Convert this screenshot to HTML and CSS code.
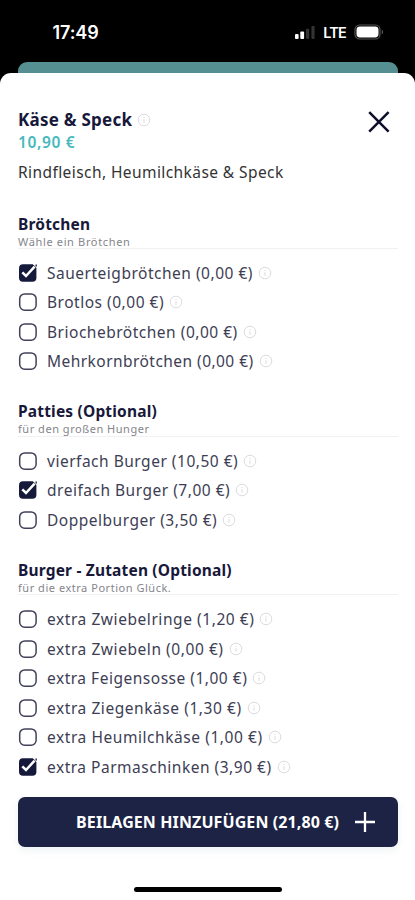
FILE: index.html
```html
<!DOCTYPE html>
<html lang="de">
<head>
<meta charset="utf-8">
<title>Käse &amp; Speck</title>
<link rel="stylesheet" href="styles.css">
</head>
<body>
<svg width="0" height="0" class="defs">
  <symbol id="info" viewBox="0 0 14 14"><circle cx="7" cy="7" r="5.8" fill="none" stroke="currentColor"/><path d="M7 6.2v3.6M7 4v1" stroke="currentColor" stroke-width="1.1"/></symbol>
  <symbol id="off" viewBox="0 0 20 20"><rect x="1.7" y="1.9" width="16.4" height="16.4" rx="5" fill="#fff" stroke="#41425a" stroke-width="1.5"/></symbol>
  <symbol id="on" viewBox="0 0 20 20"><rect x="1" y="1.2" width="17.4" height="17.6" rx="4" fill="#151a3b"/><path d="M14.8 1h3.9v4.2z" fill="#fff"/><path d="M4.3 9.3l3.7 3.7L16.6 3.6" fill="none" stroke="#fff" stroke-width="2.5"/><path d="M18.2 1.6v1.8" stroke="#151a3b" stroke-width="1.3"/></symbol>
</svg>
<header class="status">
  <span class="time">17:49</span>
  <div class="indicators">
    <svg class="signal" width="22" height="15" viewBox="0 0 22 15"><rect x="1" y="9" width="3.6" height="5" rx="1" fill="#fff"/><rect x="6.3" y="6.5" width="3.8" height="7.5" rx="1" fill="#fff"/><rect x="12" y="3.7" width="3.2" height="10.3" rx="1" fill="#333"/><rect x="17.4" y="1" width="3.2" height="13" rx="1" fill="#333"/></svg>
    <span class="lte">LTE</span>
    <svg class="battery" width="31" height="16" viewBox="0 0 31 16"><rect x="1" y="1" width="25" height="14" rx="4.6" fill="none" stroke="#555" stroke-width="1.2"/><rect x="2.5" y="2.5" width="22" height="11" rx="3.4" fill="#fff"/><path d="M27.8 5.5q2.4 2.5 0 5z" fill="#666"/></svg>
  </div>
</header>
<div class="behind"></div>
<main class="sheet">
  <div class="top">
    <div>
      <h1><span class="name">Käse &amp; Speck</span><svg class="info"><use href="#info"/></svg></h1>
      <div class="price">10,90 €</div>
    </div>
    <svg class="close" width="24" height="24" viewBox="0 0 24 24"><path d="M2.2 2.2l19.4 19.4M21.6 2.2L2.2 21.6" stroke="#0d0e2b" stroke-width="2.5"/></svg>
  </div>
  <p class="desc">Rindfleisch, Heumilchkäse &amp; Speck</p>

  <section>
    <div class="head"><h2>Brötchen</h2><p class="wide">Wähle ein Brötchen</p></div>
    <div class="row"><svg class="box"><use href="#on"/></svg><span>Sauerteigbrötchen (0,00 €)</span><svg class="info"><use href="#info"/></svg></div>
    <div class="row"><svg class="box"><use href="#off"/></svg><span>Brotlos (0,00 €)</span><svg class="info"><use href="#info"/></svg></div>
    <div class="row"><svg class="box"><use href="#off"/></svg><span>Briochebrötchen (0,00 €)</span><svg class="info"><use href="#info"/></svg></div>
    <div class="row tight"><svg class="box"><use href="#off"/></svg><span>Mehrkornbrötchen (0,00 €)</span><svg class="info"><use href="#info"/></svg></div>
  </section>
  <section>
    <div class="head"><h2>Patties (Optional)</h2><p>für den großen Hunger</p></div>
    <div class="row"><svg class="box"><use href="#off"/></svg><span>vierfach Burger (10,50 €)</span><svg class="info"><use href="#info"/></svg></div>
    <div class="row"><svg class="box"><use href="#on"/></svg><span>dreifach Burger (7,00 €)</span><svg class="info"><use href="#info"/></svg></div>
    <div class="row"><svg class="box"><use href="#off"/></svg><span>Doppelburger (3,50 €)</span><svg class="info"><use href="#info"/></svg></div>
  </section>
  <section>
    <div class="head"><h2>Burger - Zutaten (Optional)</h2><p>für die extra Portion Glück.</p></div>
    <div class="row loose"><svg class="box"><use href="#off"/></svg><span>extra Zwiebelringe (1,20 €)</span><svg class="info"><use href="#info"/></svg></div>
    <div class="row loose"><svg class="box"><use href="#off"/></svg><span>extra Zwiebeln (0,00 €)</span><svg class="info"><use href="#info"/></svg></div>
    <div class="row"><svg class="box"><use href="#off"/></svg><span>extra Feigensosse (1,00 €)</span><svg class="info"><use href="#info"/></svg></div>
    <div class="row loose"><svg class="box"><use href="#off"/></svg><span>extra Ziegenkäse (1,30 €)</span><svg class="info"><use href="#info"/></svg></div>
    <div class="row loose"><svg class="box"><use href="#off"/></svg><span>extra Heumilchkäse (1,00 €)</span><svg class="info"><use href="#info"/></svg></div>
    <div class="row"><svg class="box"><use href="#on"/></svg><span>extra Parmaschinken (3,90 €)</span><svg class="info"><use href="#info"/></svg></div>
  </section>
  <button class="add"><span>BEILAGEN HINZUFÜGEN (21,80 €)</span><svg width="22" height="22" viewBox="0 0 22 22"><path d="M11 1v20M1 11h20" stroke="#fff" stroke-width="2.3"/></svg></button>
  <div class="home"></div>
</main>
</body>
</html>
```
FILE: styles.css
```css
* { box-sizing: border-box; }
body {
  margin: 0;
  width: 415px;
  height: 900px;
  overflow: hidden;
  display: flex;
  flex-direction: column;
  background: #000;
  color: #2b2c45;
  font-family: "Noto Sans", sans-serif;
}
h1, h2, p { margin: 0; }
svg { display: block; flex: none; }
.defs { position: absolute; }
.status {
  height: 62px;
  padding: 2px 30px 0 52.5px;
  display: flex;
  align-items: center;
  justify-content: space-between;
  color: #fff;
  font-family: Inter, sans-serif;
}
.time { font-size: 18px; font-weight: 600; letter-spacing: -0.1px; }
.indicators { display: flex; align-items: center; }
.lte { margin: 0 8px 0 7px; font-size: 14.5px; font-weight: 600; letter-spacing: -0.8px; }
.behind {
  flex: none;
  height: 11px;
  margin: 0 17px 0 18px;
  border-radius: 9px 9px 0 0;
  background: #568f91;
}
.sheet {
  flex: 1;
  padding: 35px 17px 0 18px;
  background: #fff;
  border-radius: 11px 11px 0 0;
}
.top { display: flex; justify-content: space-between; }
h1 {
  height: 23px;
  display: flex;
  align-items: center;
  color: #17183a;
  font-size: 17px;
  line-height: 23px;
  font-weight: 700;
  letter-spacing: 0.25px;
}
.info { width: 14px; height: 14px; margin-left: 5px; color: #dcdce0; }
.price {
  color: #47b9bd;
  font-size: 15.5px;
  line-height: 22px;
  font-weight: 600;
  letter-spacing: 0.65px;
}
.close { margin: 2px 7px 0 0; }
.desc {
  margin-top: 9px;
  color: #333;
  font-size: 15.5px;
  line-height: 21px;
  letter-spacing: 0.42px;
}
.head {
  height: 60.8px;
  padding-top: 25px;
  margin-bottom: 8.8px;
  border-bottom: 1px solid #f1f1f3;
}
section:first-of-type .head { height: 66px; padding-top: 31px; }
h2 {
  color: #17183a;
  font-size: 15.5px;
  line-height: 21px;
  font-weight: 700;
  letter-spacing: 0.18px;
}
.head p {
  color: #85858c;
  font-size: 11px;
  line-height: 14px;
  letter-spacing: 0.53px;
}
.head p.wide { letter-spacing: 0.65px; }
.row {
  height: 29.6px;
  display: flex;
  align-items: center;
  color: #3d3e54;
  font-size: 15.5px;
  line-height: 22px;
  letter-spacing: 0.51px;
}
.row.loose { letter-spacing: 0.56px; }
.row.tight { letter-spacing: 0.45px; }
.box { width: 20px; height: 20px; margin-right: 9px; }
.add {
  width: 380px;
  height: 50px;
  margin-top: 15px;
  padding: 0 22px 0 0;
  display: flex;
  align-items: center;
  justify-content: flex-end;
  gap: 15px;
  border: 0;
  border-radius: 7px;
  background: #1c2344;
  box-shadow: 0 3px 8px rgba(80, 140, 150, 0.1);
  color: #fff;
  font: 700 16px "Noto Sans", sans-serif;
  letter-spacing: 0.1px;
}
.home {
  width: 148px;
  height: 5px;
  margin: 40px auto 0;
  border-radius: 3px;
  background: #000;
}
```
